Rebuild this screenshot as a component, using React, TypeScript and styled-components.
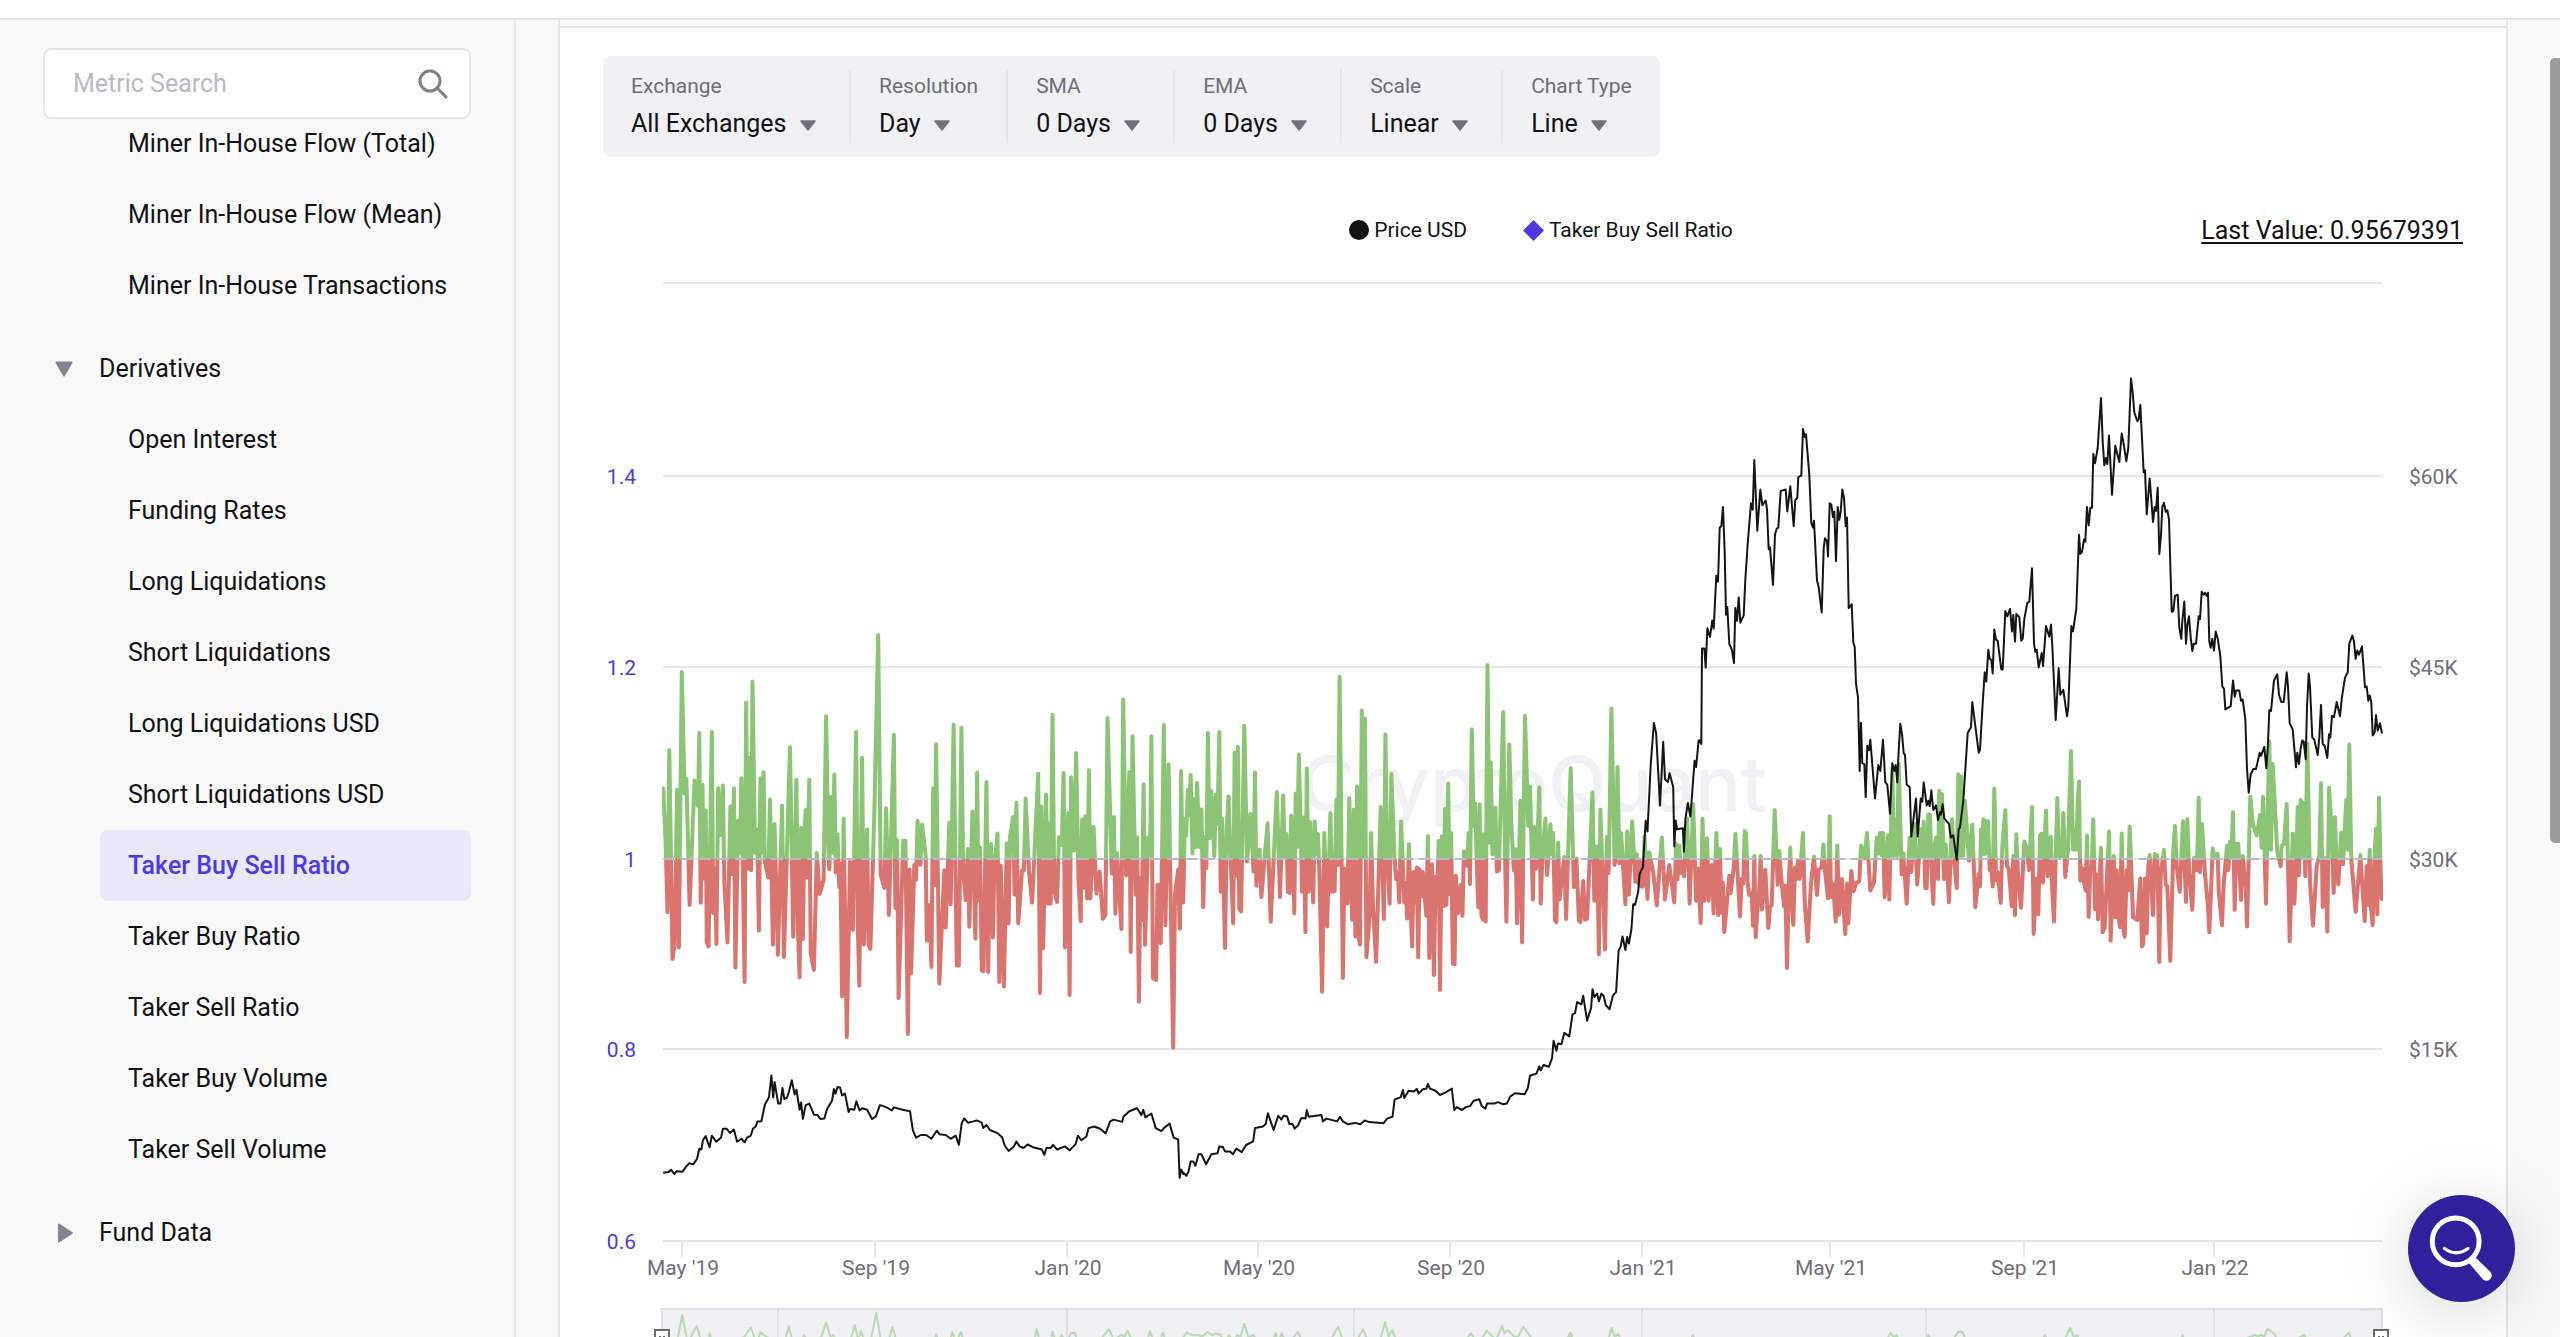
import React from 'react';
import styled, { createGlobalStyle } from 'styled-components';

const color = {
  ink: '#121214',
  muted: '#6f6d7a',
  line: '#e5e5ec',
  page: '#f9f9f9',
  panel: '#f1f0f4',
  accent: '#4d3ae0',
  accentSoft: '#eae8f9',
  green: '#8cc476',
  red: '#d9746f',
};

const GlobalStyle = createGlobalStyle`
  *, *::before, *::after { box-sizing: border-box; }
  body {
    margin: 0;
    background: ${color.page};
    color: ${color.ink};
    font-family: Roboto, "Liberation Sans", sans-serif;
    font-size: 25px;
  }
  ul { list-style: none; margin: 0; padding: 0; }
`;

const Page = styled.div`
  display: flex;
  flex-direction: column;
  height: 100vh;
  overflow: hidden;
`;

const TopBar = styled.header`
  flex: none;
  height: 20px;
  background: #fff;
  border-bottom: 2px solid ${color.line};
`;

const Columns = styled.div`
  display: flex;
  flex: 1;
  min-height: 0;
`;

/* ---------- sidebar ---------- */

const Sidebar = styled.nav`
  display: flex;
  flex-direction: column;
  flex: none;
  width: 516px;
  padding: 28px 43px 0;
  border-right: 2px solid ${color.line};
  overflow: hidden;
`;

const SearchBox = styled.label`
  display: flex;
  align-items: center;
  flex: none;
  height: 71px;
  padding: 0 21px 0 28px;
  background: #fff;
  border: 2px solid ${color.line};
  border-radius: 8px;
`;

const SearchInput = styled.input`
  flex: 1;
  min-width: 0;
  padding: 0;
  border: 0;
  outline: 0;
  background: transparent;
  color: ${color.ink};
  font: inherit;
  &::placeholder { color: #b9b8c5; opacity: 1; }
`;

const Tree = styled.div`
  flex: 1;
  min-height: 0;
  overflow: hidden;
`;

const MetricList = styled.ul<{ $scrolled?: boolean }>`
  margin-left: 57px;
  margin-top: ${(p) => (p.$scrolled ? '-11px' : '0')};
`;

const MetricLink = styled.a<{ $active?: boolean }>`
  display: flex;
  align-items: center;
  height: 71px;
  padding: 0 28px;
  border-radius: 8px;
  color: ${(p) => (p.$active ? color.accent : color.ink)};
  background: ${(p) => (p.$active ? color.accentSoft : 'transparent')};
  font-weight: ${(p) => (p.$active ? 500 : 400)};
  text-decoration: none;
  white-space: nowrap;
`;

const GroupButton = styled.button`
  display: flex;
  align-items: center;
  gap: 26px;
  width: 100%;
  height: 71px;
  margin-top: 12px;
  padding: 0 0 0 12px;
  border: 0;
  background: transparent;
  color: inherit;
  font: inherit;
  text-align: left;
`;

/* ---------- main card ---------- */

const Main = styled.main`
  flex: 1;
  min-width: 0;
  padding: 0 52px 0 42px;
`;

const Card = styled.section`
  background: #fff;
  border: solid ${color.line};
  border-width: 0 2px;
`;

const CardHead = styled.div`
  height: 8px;
  border-bottom: 2px solid ${color.line};
`;

const CardBody = styled.div`
  padding: 28px 43px 0;
`;

const Filters = styled.form`
  display: inline-flex;
  height: 101px;
  padding: 14px 0;
  background: ${color.panel};
  border-radius: 8px;
  vertical-align: top;
`;

const Filter = styled.div`
  display: flex;
  flex-direction: column;
  gap: 10px;
  padding: 4px 28px 0;
  & + & { border-left: 2px solid ${color.line}; }
`;

const FilterLabel = styled.label`
  color: ${color.muted};
  font-size: 21px;
  line-height: 24px;
`;

const SelectWrap = styled.div`
  display: flex;
  align-items: center;
`;

const Select = styled.select`
  appearance: none;
  height: 32px;
  padding: 0 34px 0 0;
  border: 0;
  outline: 0;
  background: transparent;
  color: ${color.ink};
  font: inherit;
  line-height: 32px;
`;

const SelectCaret = styled.svg`
  width: 16px;
  height: 11px;
  margin: 2px 5px 0 -21px;
  pointer-events: none;
`;

const LegendRow = styled.div`
  display: grid;
  grid-template-columns: 1fr auto 1fr;
  align-items: center;
  height: 36px;
  margin-top: 55px;
`;

const Legend = styled.ul`
  grid-column: 2;
  display: flex;
  gap: 56px;
  padding-left: 16px;
`;

const LegendItem = styled.li`
  display: flex;
  align-items: center;
  gap: 5px;
  font-size: 21px;
  line-height: 24px;
`;

const LastValue = styled.a`
  justify-self: end;
  color: inherit;
  text-decoration: underline;
  text-decoration-thickness: 2px;
  text-underline-offset: 3px;
`;

const ChartSvg = styled.svg`
  display: block;
  width: 100%;
  height: auto;
  font-size: 21px;
  .left { fill: ${color.accent}; text-anchor: end; }
  .right { fill: ${color.muted}; }
  .month { fill: ${color.muted}; text-anchor: middle; }
`;

const Watermark = styled.text`
  fill: #f1f0f5;
  font-family: Inter, sans-serif;
  font-size: 76px;
  font-weight: 500;
`;

const HelpButton = styled.button`
  position: fixed;
  right: 45px;
  bottom: 35px;
  width: 107px;
  height: 107px;
  padding: 0;
  border: 0;
  border-radius: 50%;
  background: #2f209c;
  box-shadow: 0 10px 70px rgba(0, 0, 0, 0.16);
`;

const ScrollThumb = styled.div`
  position: fixed;
  top: 58px;
  right: 0;
  width: 10px;
  height: 785px;
  border-radius: 5px 0 0 5px;
  background: #9b9b99;
`;

/* ---------- chart data ---------- */

// Each block stores a run of samples as "x,y" pairs on its own grid.
type Block = { x: number; y: number; kx: number; ky: number; samples: string };

const toPath = (blocks: Block[]) =>
  'M' +
  blocks
    .flatMap((b) =>
      b.samples
        .trim()
        .split(/\s+/)
        .map((pair) => {
          const [px, py] = pair.split(',').map(Number);
          return `${(b.x + px / b.kx).toFixed(1)} ${(b.y + py / b.ky).toFixed(1)}`;
        }),
    )
    .join('L');

const A = { x: 37, y: 352, kx: 2.8, ky: 2.6133 };
const B = { x: 577, y: 392, kx: 2.8, ky: 2.8 };
const C = { x: 997, y: 112, kx: 3, ky: 2.1778 };
const D = { x: 1377, y: 112, kx: 3, ky: 2.45 };

const ratio = toPath([
  {
    ...A,
    samples: `65,492 72,640 77,816 82,392 91,938 97,900 104,496 109,908 117,188 125,506 130,468 139,797 153,472 162,538 166,347 170,791 175,483 179,728 184,550 187,895 192,905 201,345 205,818 211,702 214,899 219,492 226,614 232,485 236,735 245,895 253,540 257,716 263,492 267,960 275,576 280,660 284,466 293,998 297,268 302,702 305,412 311,706 315,213 322,660 328,600 333,864 337,466 341,660 346,450 349,680 359,725 364,521 372,901 377,585 386,927 398,537 403,933 420,385 429,880 438,470 442,860 447,986 451,595 456,886 460,620 464,549 468,725 474,470 478,922 487,967 495,661 503,768 514,732 521,304 527,640 530,704 535,515 540,660 544,456 548,712 553,613 558,750 561,690 566,1036 570,571 579,1142 588,684 592,850 596,862 605,345 610,860 614,1008 618,690 622,412 627,900 636,600 640,900 645,912 656,560 667,92 674,718 684,752 689,544 697,823 711,352 715,805 720,627 724,1040 737,629 743,629 750,1134 755,704 759,976 768,692 773,731 777,577 785,692 790,587 800,668 803,890 811,797 816,959 821,492 825,745 829,377 838,1002 852,706 856,856 866,582 870,795 878,326 887,955 893,955 900,334 905,708 912,784 918,651 922,854 931,553 939,885 944,451 948,784 952,647 957,968 962,970 970,476 975,972 979,690 983,638 988,882 992,700 1001,610 1006,998 1010,694 1019,1010 1027,636 1032,845 1036,620 1045,567 1049,770 1054,530 1059,845 1070,706 1075,706 1080,519 1089,706 1098,791 1115,454 1120,1027 1124,540 1129,910 1137,508 1142,793 1146,584 1150,793 1155,300 1160,760 1168,789 1173,620 1181,640 1186,452 1190,908 1199,557 1203,1032 1207,463 1216,655 1221,400 1228,740 1234,839 1238,574 1243,751 1247,565 1252,780 1257,445 1261,780 1270,593 1278,767 1287,710 1296,833 1303,823 1309,308 1321,715 1327,567 1331,820 1336,662 1348,860 1353,260 1361,720 1370,450 1374,920 1379,356 1388,770 1392,620 1397,1050 1401,726 1405,837 1410,482 1414,901 1423,620 1428,665 1432,356 1436,988 1445,993 1449,744 1453,744 1458,897 1467,327 1471,850 1480,430 1484,670 1493,1170 1498,770 1507,704 1511,858`,
  },
  {
    ...B,
    samples: `0,808 3,367 9,735 14,500 17,548 22,420 25,490 30,378 35,598 40,445 43,580 48,400 54,580 60,475 65,748 70,550 74,638 78,260 83,555 87,422 96,605 100,433 105,515 110,258 114,705 118,500 126,862 131,520 136,438 140,565 149,793 153,315 157,660 162,300 166,752 171,760 180,240 188,620 197,487 206,648 210,371 214,688 223,587 228,720 245,513 254,789 271,426 275,550 280,720 289,435 293,605 298,543 302,705 307,708 311,492 316,605 320,765 324,430 328,580 333,321 342,705 346,497 351,818 355,360 360,705 364,510 373,735 377,508 381,600 386,543 390,640 398,985 404,540 412,802 421,485 426,705 433,703 438,447 442,630 447,103 456,946 460,640 469,738 474,443 482,783 487,475 491,830 496,410 500,830 504,853 509,197 513,605 518,220 522,888 531,772 535,540 540,738 549,901 562,468 566,600 571,781 575,265 580,600 587,738 592,375 600,600 605,670 610,650 614,735 619,508 628,735 632,680 636,780 641,572 645,730 650,858 654,650 658,735 663,637 667,888 671,642 676,718 680,650 685,718 690,772 694,549 698,890 702,720 706,628 711,938 716,663 720,740 724,563 728,980 733,550 738,745 742,473 746,742 751,402 755,712 759,540 764,906 769,908 772,660 778,765 786,686 791,772 795,592 804,632 808,540 812,683 817,250 822,520 826,457 835,748 839,460 844,770 848,783 851,543 856,788 861,70 866,567 870,343 875,600 883,470 887,648 893,645 905,202 910,600 914,789 922,293 928,520 935,645 940,586 944,793 949,640 953,450 958,847 966,212 975,520 980,410 988,727 992,524 997,640 1001,560 1006,413 1010,738 1015,600 1023,500 1028,658 1037,516 1041,600 1045,540 1050,785 1054,790 1059,567 1063,727 1076,608 1081,781 1094,358 1103,692 1110,612 1117,785 1121,790 1129,675 1134,783 1140,780 1155,427 1160,730 1168,578 1173,880 1177,475 1190,867 1195,552 1200,652 1208,192 1217,630 1221,600 1225,356 1230,625 1235,541 1247,740 1252,536 1257,713 1266,508 1275,677 1279,600 1283,680 1287,620 1291,690 1296,690 1301,550 1309,725 1314,595 1325,650 1335,743 1349,553 1358,727 1370,630 1384,735 1389,570 1393,670 1398,575 1402,652 1407,620 1411,662 1420,500 1427,738 1437,460 1445,730 1450,640 1458,792 1463,500 1468,730 1472,620 1476,555 1480,730 1485,640 1489,630 1494,765 1502,540 1507,770 1512,585 1516,763 1520,680 1524,818 1538,660 1542,708 1550,640 1555,543`,
  },
  {
    ...C,
    samples: `420,1212 425,1130 430,1140 434,1026 438,1030 443,1140 448,1165 455,1160 459,1232 463,1080 467,1257 472,1200 477,1165 482,1080 486,1197 496,1110 505,1237 510,1190 515,1188 524,980 533,1143 538,1070 543,1120 552,1190 556,1145 561,1324 566,1145 571,1062 575,1180 580,1230 585,1105 590,1130 594,1090 599,1130 609,1030 614,1180 623,1266 633,1140 642,1082 651,1165 656,1110 665,1105 670,1055 675,1110 684,1172 689,994 693,1170 698,1140 702,1170 707,1223 712,1057 717,1208 722,1150 726,1130 731,1200 736,1250 741,1140 745,1227 754,1113 761,1157 768,1140 778,1135 783,1057 793,1085 801,1030 811,1155 822,1138 830,1040 835,1075 840,1030 844,1078 849,1030 854,1170 863,1035 868,1175 877,890 882,1080 887,1000 891,1080 896,880 905,1120 910,1075 920,1184 929,1040 934,1115 943,1010 952,1142 962,1022 967,1080 971,1005 976,1150 980,1150 985,990 990,990 995,1120 1000,1184 1004,1060 1008,1040 1014,1130 1018,938 1023,1080 1026,945 1032,1130 1037,1055 1047,1181 1056,1000 1061,1080 1070,1150 1075,902 1080,1080 1084,907 1089,1080 1095,960 1103,1050 1107,1090 1117,1012 1126,1192 1136,1120`,
  },
  {
    ...D,
    samples: `0,1290 3,1150 7,1210 10,1125 15,1210 20,1130 24,1130 29,1250 34,1240 38,1290 43,1050 48,1275 53,1255 62,1330 67,1190 76,1103 81,1240 86,1245 95,1338 100,1215 105,1360 109,1162 114,1260 123,1342 133,1180 142,1200 147,1250 156,1095 161,1406 168,1270 175,1358 180,1165 185,1160 189,1280 198,1104 203,1265 212,1168 217,1300 222,1376 232,1073 237,1215 246,1215 250,1110 256,1267 264,1200 273,958 279,1200 285,1150 289,1200 293,1080 297,1033 301,1275 308,1245 312,1280 317,1300 321,1165 326,1364 331,1245 335,1245 340,1125 345,1345 350,1260 354,1370 363,1195 368,1402 374,1390 387,1155 392,1422 397,1300 401,1215 406,1365 410,1250 415,1360 420,1390 425,1160 430,1390 434,1413 440,1250 444,1300 449,1143 459,1365 472,1372 481,1270 486,1437 490,1430 495,1270 500,1405 505,1240 509,1213 519,1360 524,1210 532,1215 538,1475 542,1260 547,1230 552,1200 557,1285 562,1290 571,1472 580,1200 585,1142 590,1240 599,1303 609,1130 613,1215 618,1328 622,1125 627,1250 637,1347 642,1220 651,1250 656,1072 660,1255 666,1137 675,1260 684,1340 688,1402 698,1197 703,1215 713,1210 716,1300 726,1385 731,1285 741,1190 745,1250 750,1180 754,1215 759,1108 764,1347 769,1185 775,1185 783,1323 788,1215 797,1290 801,1388 811,1070 818,1135 830,1165 840,1115 845,1195 849,1070 858,1332 862,1150 868,935 873,1200 878,990 892,1205 902,1240 905,1190 912,1185 920,1088 929,1424 938,1160 943,1332 948,1240 953,1095 957,1262 962,1078 967,1215 971,1085 976,1265 982,940 990,1280 999,1386 1010,1240 1018,1215 1023,1036 1028,1340 1037,1220 1042,1400 1047,1048 1055,1150 1061,1305 1065,1120 1070,1240 1075,1285 1084,1158 1089,1235 1094,1150 1099,1078 1103,1200 1108,942 1114,1225 1127,1352 1141,1213 1154,1375 1160,1240 1164,1335 1169,1200 1173,1340 1178,1385 1183,1230 1188,1148 1192,1358 1197,1072 1202,1260 1205,1320`,
  },
]);

const price = toPath([
  {
    ...A,
    samples: `65,1497 80,1495 87,1489 96,1500 103,1493 119,1494 128,1482 138,1472 149,1475 160,1460 166,1434 172,1436 176,1412 184,1401 190,1418 195,1430 201,1400 214,1416 227,1405 232,1382 243,1382 252,1393 263,1384 272,1416 284,1408 293,1417 300,1405 310,1400 316,1382 324,1376 329,1363 340,1362 350,1318 361,1300 368,1243 373,1300 377,1260 387,1316 393,1316 399,1275 404,1304 412,1300 417,1285 425,1255 433,1292 438,1280 447,1332 451,1313 456,1356 464,1320 474,1316 487,1345 497,1346 505,1356 516,1355 524,1330 538,1308 543,1278 547,1290 553,1273 560,1274 566,1295 574,1290 584,1338 588,1330 600,1332 606,1310 615,1334 622,1328 636,1332 650,1356 660,1350 672,1320 680,1322 693,1327 705,1334 711,1326 735,1332 756,1336 764,1386 773,1405 786,1398 801,1398 816,1408 831,1387 838,1396 856,1398 870,1408 884,1400 893,1424 901,1366 908,1355 918,1366 931,1363 943,1360 957,1366 961,1380 970,1372 980,1385 1002,1394 1014,1404 1021,1425 1032,1440 1047,1428 1054,1415 1063,1428 1074,1432 1085,1423 1100,1430 1125,1436 1132,1450 1138,1432 1150,1432 1156,1424 1168,1436 1190,1428 1203,1438 1220,1422 1226,1400 1236,1412 1250,1402 1256,1380 1272,1376 1288,1382 1304,1394 1316,1363 1326,1358 1350,1364 1354,1350 1370,1336 1381,1332 1392,1328 1404,1346 1409,1332 1415,1352 1432,1342 1444,1380 1460,1388 1467,1380 1483,1368 1494,1405 1507,1410 1511,1510 1515,1488 1521,1500`,
  },
  {
    ...B,
    samples: `8,1490 18,1500 24,1488 30,1460 37,1460 43,1472 52,1440 60,1440 73,1468 88,1440 105,1437 110,1418 120,1420 126,1432 140,1432 148,1440 158,1424 173,1434 185,1414 205,1404 210,1366 232,1362 240,1355 246,1325 262,1372 275,1332 284,1343 290,1332 300,1334 306,1355 315,1355 321,1368 330,1360 340,1338 351,1340 355,1316 360,1335 396,1330 400,1348 410,1340 440,1348 448,1335 456,1348 470,1356 490,1352 505,1356 517,1345 530,1350 570,1353 580,1340 595,1335 601,1287 618,1280 624,1260 628,1282 640,1262 655,1264 663,1257 668,1270 680,1258 690,1256 694,1243 700,1256 715,1262 728,1274 745,1266 761,1256 768,1316 775,1308 790,1316 800,1308 812,1305 822,1290 838,1286 845,1305 855,1312 860,1298 880,1298 890,1294 905,1300 915,1298 925,1278 938,1269 965,1272 974,1254 980,1220 998,1214 1006,1194 1010,1205 1018,1190 1033,1195 1042,1170 1046,1122 1054,1150 1058,1130 1068,1132 1076,1100 1090,1110 1099,1048 1106,1045 1112,1014 1124,1020 1129,996 1140,1066 1151,1030 1155,978 1160,1000 1168,990 1173,1012 1180,990 1186,996 1192,1022 1203,1034 1212,995 1221,986 1228,870 1234,858 1239,830 1247,868 1252,832 1257,850 1264,810 1269,740 1274,742 1283,705 1287,655 1296,636 1304,505 1309,536 1318,350 1327,232 1333,260 1344,463 1353,285 1358,390 1366,398 1371,373 1381,412 1384,578 1388,505 1392,530 1408,527 1411,593 1415,500 1422,456 1429,495 1441,338 1445,356 1452,282`,
  },
  {
    ...C,
    samples: `299,828 304,836 306,628 313,628 317,670 322,584 330,603 337,567 341,585 349,470 354,483 359,365 364,362 369,320 374,420 378,555 382,538 388,618 396,632 402,660 406,540 411,568 416,517 421,572 431,556 436,480 443,400 453,312 458,326 463,218 472,372 481,282 487,316 497,306 501,325 506,412 510,408 519,490 525,380 530,367 535,365 542,285 557,282 562,330 571,275 581,362 586,305 592,300 595,255 604,252 609,150 614,168 618,162 628,250 634,355 639,365 642,350 651,480 656,495 665,550 671,410 675,388 681,395 684,428 689,312 694,315 699,342 703,330 708,438 713,320 718,348 722,330 727,282 732,300 737,362 741,343 746,540 755,532 760,615 764,625 768,705 774,735 779,895 783,790 787,878 793,880 797,952 802,840 807,850 811,827 825,955 835,882 841,895 849,827 856,920 862,925 870,988 877,878 883,895 887,882 892,920 896,850 901,792 906,815 911,856 915,860 920,925 929,930 934,1038 948,955 953,1038 962,955 967,962 971,920 980,970 985,960 989,972 994,937 1000,980 1008,970 1014,1002 1020,985 1023,990 1028,967 1033,998 1047,1010 1052,1040 1060,1035 1070,1088 1076,1022 1080,1018 1090,960 1103,812 1113,800 1117,745 1136,855`,
  },
  {
    ...D,
    samples: `0,955 8,840 14,765 19,788 25,710 29,732 34,735 38,768 43,660 48,685 53,688 64,758 68,758 76,615 82,628 90,610 96,665 100,625 105,690 109,622 118,630 124,688 128,683 133,635 142,595 148,592 156,510 162,695 166,715 170,710 176,753 185,718 189,750 198,652 208,678 213,648 217,700 227,882 236,755 241,820 250,808 261,873 265,850 274,652 279,665 289,610 297,428 301,475 306,470 312,440 316,445 321,360 326,405 331,362 336,362 340,230 345,253 353,215 363,93 368,200 373,258 378,240 382,255 387,185 396,330 406,210 418,250 425,180 430,200 439,248 445,215 453,45 458,80 463,128 472,150 476,145 481,110 491,275 495,270 500,378 509,290 519,397 524,360 528,370 533,313 538,475 543,430 547,360 552,350 557,372 562,368 567,390 575,617 580,615 585,578 593,575 598,655 604,683 607,640 613,592 618,695 622,650 627,628 632,680 637,713 641,695 648,695 656,628 660,635 665,568 671,575 675,570 680,578 684,570 688,690 692,705 697,683 702,712 707,665 713,682 721,725 727,800 732,805 736,856 752,848 759,785 764,825 768,810 778,810 783,835 788,832 796,880 801,1000 806,1060 812,1015 820,1002 828,1002 839,962 843,970 853,948 859,1000 864,940 868,858 873,860 882,785 892,770 897,820 904,838 911,838 920,765 924,800 929,890 938,905 943,950 948,998 952,962 957,990 962,950 967,932 971,935 977,978 981,850 986,768 990,800 997,925 1003,930 1013,968 1018,925 1023,845 1028,940 1034,945 1042,975 1047,917 1051,925 1056,872 1062,875 1070,838 1080,873 1085,830 1095,778 1103,765 1108,695 1117,675 1122,690 1127,732 1132,712 1137,722 1146,702 1155,802 1160,800 1165,835 1169,822 1174,838 1178,920 1184,912 1188,870 1193,908 1200,890 1206,915`,
  },
]);

const overview = toPath([
  {
    x: 37,
    y: 972,
    kx: 1.6333,
    ky: 3,
    samples: `60,370 69,286 78,370 86,340 93,318 101,370 111,370 114,340 118,370 170,352 181,322 190,370 197,337 202,345 208,352 236,370 243,318 250,370 262,370 268,345 276,370 296,352 304,307 311,350 316,345 322,370 342,370 351,316 356,360 361,334 368,370 378,352 386,278 394,370 405,370 412,320 420,370 478,370 484,343 488,370 505,370 510,336 516,370 524,336 530,370 643,370 648,328 654,370 670,370 674,336 680,370 689,345 696,370 704,340 710,338 716,370 752,360 766,327 774,360 786,344 791,352 796,332 806,370 828,370 833,332 840,370 848,370 854,338 860,370 880,370 893,338 903,346 912,345 918,350 927,336 935,346 940,340 948,345 955,370 962,345 970,370 975,345 981,350 987,312 994,352 1002,345 1010,370 1032,370 1038,340 1042,370 1048,340 1056,370 1066,355 1074,336 1084,370 1125,370 1140,320 1150,370 1168,370 1181,328 1190,370 1207,370 1217,307 1223,350 1228,330 1238,370 1345,370 1357,340 1368,370 1376,352 1383,332 1398,360 1408,318 1412,340 1417,330 1428,350 1434,350 1443,320 1458,360 1470,370 1515,370 1520,338 1526,370`,
  },
  {
    x: 957,
    y: 972,
    kx: 1.8233,
    ky: 3,
    samples: `10,370 18,338 26,370 86,370 94,324 100,352 106,342 114,370 236,370 242,345 250,370 592,370 603,338 608,352 614,345 620,370 664,370 672,345 680,370 712,370 726,335 734,336 742,370 876,370 884,345 892,370 918,365 930,324 937,352 943,345 950,370 1130,370 1135,345 1140,370 1250,355 1268,345 1272,350 1278,345 1284,350 1290,326 1303,342 1310,370 1340,360 1357,344 1364,370 1420,370 1438,338 1446,370`,
  },
]);

const rows = [
  { y: 35 },
  { y: 228, left: '1.4', right: '$60K' },
  { y: 419, left: '1.2', right: '$45K' },
  { y: 611, left: '1', right: '$30K' },
  { y: 801, left: '0.8', right: '$15K' },
  { y: 993, left: '0.6' },
];

const months = [
  { x: 79, label: "May '19" },
  { x: 272, label: "Sep '19" },
  { x: 464, label: "Jan '20" },
  { x: 655, label: "May '20" },
  { x: 847, label: "Sep '20" },
  { x: 1039, label: "Jan '21" },
  { x: 1227, label: "May '21" },
  { x: 1421, label: "Sep '21" },
  { x: 1611, label: "Jan '22" },
];

const navigatorLines = [175, 464, 751, 1039, 1323, 1611];

const minerMetrics = ['Miner In-House Flow (Total)', 'Miner In-House Flow (Mean)', 'Miner In-House Transactions'];

const derivativeMetrics = [
  'Open Interest',
  'Funding Rates',
  'Long Liquidations',
  'Short Liquidations',
  'Long Liquidations USD',
  'Short Liquidations USD',
  'Taker Buy Sell Ratio',
  'Taker Buy Ratio',
  'Taker Sell Ratio',
  'Taker Buy Volume',
  'Taker Sell Volume',
];

const filters = [
  { id: 'exchange', label: 'Exchange', value: 'All Exchanges' },
  { id: 'resolution', label: 'Resolution', value: 'Day' },
  { id: 'sma', label: 'SMA', value: '0 Days' },
  { id: 'ema', label: 'EMA', value: '0 Days' },
  { id: 'scale', label: 'Scale', value: 'Linear' },
  { id: 'type', label: 'Chart Type', value: 'Line' },
];

function GroupCaret({ open }: { open: boolean }) {
  return (
    <svg width="18" height="20" viewBox="0 0 18 20" aria-hidden="true">
      <path
        d={open ? 'M1.5 3.5h15L9 16.5Z' : 'M4 1.5v17L17 10Z'}
        fill="#85838f"
        stroke="#85838f"
        strokeWidth="2"
        strokeLinejoin="round"
      />
    </svg>
  );
}

function Handle({ x }: { x: number }) {
  return (
    <g stroke="#6b6977" strokeWidth="2">
      <rect x={x - 7} y="1082" width="14" height="28" fill="#fff" />
      <path d={`M${x - 2} 1088v14M${x + 2} 1088v14`} />
    </g>
  );
}

function Chart() {
  return (
    <ChartSvg viewBox="0 0 1860 1130" role="img" aria-label="Taker Buy Sell Ratio and Price USD">
      <defs>
        <clipPath id="above">
          <rect x="59" y="0" width="1721" height="611" />
        </clipPath>
        <clipPath id="below">
          <rect x="59" y="611" width="1721" height="382" />
        </clipPath>
      </defs>
      {rows.map((r) => (
        <g key={r.y}>
          <path d={`M60 ${r.y}H1779`} stroke={color.line} strokeWidth="2" />
          {r.left && <text className="left" x="33" y={r.y + 8}>{r.left}</text>}
          {r.right && <text className="right" x="1806" y={r.y + 8}>{r.right}</text>}
        </g>
      ))}
      <Watermark x="697" y="563">CryptoQuant</Watermark>
      <g fill="none" strokeWidth="4" strokeLinejoin="round" strokeLinecap="round">
        <path d={ratio} stroke={color.green} clipPath="url(#above)" />
        <path d={ratio} stroke={color.red} clipPath="url(#below)" />
      </g>
      <path d="M60 611H1779" stroke="#b9b8cc" strokeWidth="2" strokeDasharray="12 6" />
      <path d={price} fill="none" stroke="#151515" strokeWidth="2" strokeLinejoin="round" />
      {months.map((m) => (
        <g key={m.label}>
          <path d={`M${m.x} 993v16`} stroke={color.line} strokeWidth="2" />
          <text className="month" x={m.x + 1} y="1027">{m.label}</text>
        </g>
      ))}
      <rect x="59" y="1061" width="1720" height="69" fill="#f1f0f5" />
      {navigatorLines.map((x) => (
        <path key={x} d={`M${x} 1062v68`} stroke="#e0dfe6" strokeWidth="2" />
      ))}
      <path d={overview} fill="none" stroke="#b7dab0" strokeWidth="2" strokeLinejoin="round" />
      <path d="M59 1130V1061H1779V1130" fill="none" stroke="#dddce4" strokeWidth="2" />
      <Handle x={59} />
      <Handle x={1778} />
    </ChartSvg>
  );
}

export default function App() {
  return (
    <Page>
      <GlobalStyle />
      <TopBar />
      <Columns>
        <Sidebar aria-label="Metrics">
          <SearchBox>
            <SearchInput type="text" placeholder="Metric Search" aria-label="Metric Search" />
            <svg width="30" height="30" viewBox="0 0 30 30" fill="none" stroke="#807e8b" aria-hidden="true">
              <circle cx="12" cy="12" r="10" strokeWidth="3" />
              <path d="M19.5 19.5L28 28" strokeWidth="3" strokeLinecap="round" />
            </svg>
          </SearchBox>
          <Tree>
            <MetricList $scrolled>
              {minerMetrics.map((m) => (
                <li key={m}>
                  <MetricLink href="#">{m}</MetricLink>
                </li>
              ))}
            </MetricList>
            <GroupButton type="button" aria-expanded="true">
              <GroupCaret open />
              Derivatives
            </GroupButton>
            <MetricList>
              {derivativeMetrics.map((m) => (
                <li key={m}>
                  <MetricLink href="#" $active={m === 'Taker Buy Sell Ratio'}>{m}</MetricLink>
                </li>
              ))}
            </MetricList>
            <GroupButton type="button" aria-expanded="false">
              <GroupCaret open={false} />
              Fund Data
            </GroupButton>
          </Tree>
        </Sidebar>
        <Main>
          <Card>
            <CardHead />
            <CardBody>
              <Filters>
                {filters.map((f) => (
                  <Filter key={f.id}>
                    <FilterLabel htmlFor={f.id}>{f.label}</FilterLabel>
                    <SelectWrap>
                      <Select id={f.id} defaultValue={f.value}>
                        <option>{f.value}</option>
                      </Select>
                      <SelectCaret viewBox="0 0 16 11" aria-hidden="true">
                        <path d="M1 1h14L8 10Z" fill="#72707d" stroke="#72707d" strokeWidth="1.5" strokeLinejoin="round" />
                      </SelectCaret>
                    </SelectWrap>
                  </Filter>
                ))}
              </Filters>
              <LegendRow>
                <Legend>
                  <LegendItem>
                    <svg width="20" height="20" aria-hidden="true">
                      <circle cx="10" cy="10" r="10" fill="#121214" />
                    </svg>
                    Price USD
                  </LegendItem>
                  <LegendItem>
                    <svg width="21" height="21" aria-hidden="true">
                      <path d="M10.5 0L21 10.5L10.5 21L0 10.5Z" fill={color.accent} />
                    </svg>
                    Taker Buy Sell Ratio
                  </LegendItem>
                </Legend>
                <LastValue href="#">Last Value: 0.95679391</LastValue>
              </LegendRow>
              <Chart />
            </CardBody>
          </Card>
        </Main>
      </Columns>
      <ScrollThumb aria-hidden="true" />
      <HelpButton type="button" aria-label="Search help">
        <svg width="107" height="107" viewBox="0 0 107 107" fill="none" stroke="#fff" aria-hidden="true">
          <circle cx="47.7" cy="46.4" r="23.4" strokeWidth="5" />
          <path d="M36.5 53.5Q48 62 60 53.5" strokeWidth="3.2" strokeLinecap="round" />
          <path d="M61 68L67.5 62.5L82 76.5A5 5 0 0 1 75 84.5Z" fill="#fff" stroke="none" />
        </svg>
      </HelpButton>
    </Page>
  );
}
